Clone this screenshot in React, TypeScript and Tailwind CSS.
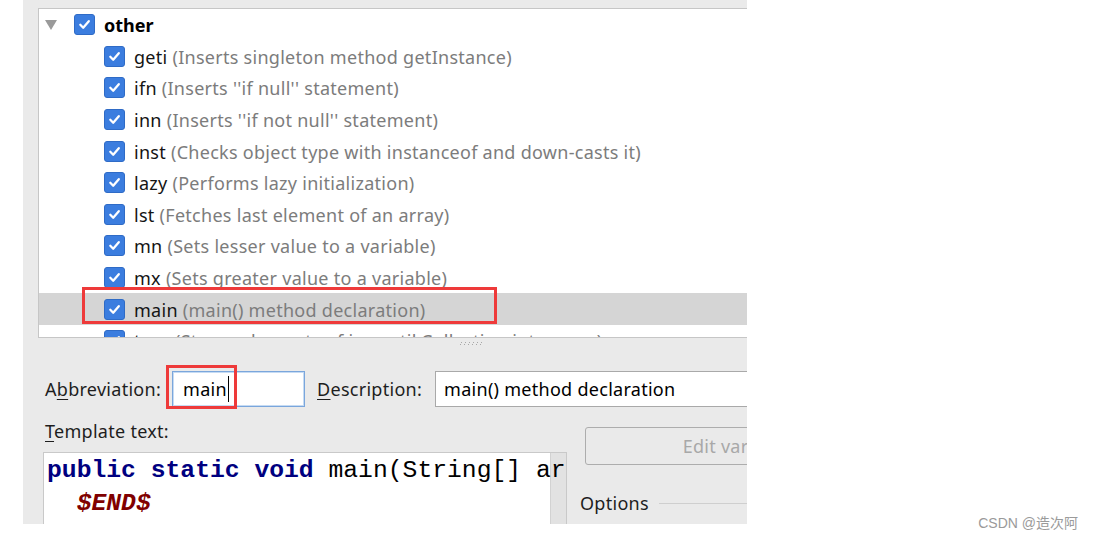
import React from "react";

const UI = { fontFamily: '"Noto Sans", "Open Sans", sans-serif' };
const MONO = { fontFamily: '"Liberation Mono", "DejaVu Sans Mono", monospace' };

function Check() {
  return (
    <div className="w-[21px] h-[21px] shrink-0 rounded-[3px] bg-[#3b7ddf] border border-[#2f6bc6] flex items-center justify-center">
      <svg width="15" height="15" viewBox="0 0 15 15">
        <path d="M3.3 7.8 L6.2 10.7 L11.8 4.2" fill="none" stroke="white" strokeWidth="2.3" strokeLinecap="round" strokeLinejoin="round" />
      </svg>
    </div>
  );
}

type Item = { abbr: string; desc: string };

const items: Item[] = [
  { abbr: "geti", desc: "Inserts singleton method getInstance" },
  { abbr: "ifn", desc: "Inserts ''if null'' statement" },
  { abbr: "inn", desc: "Inserts ''if not null'' statement" },
  { abbr: "inst", desc: "Checks object type with instanceof and down-casts it" },
  { abbr: "lazy", desc: "Performs lazy initialization" },
  { abbr: "lst", desc: "Fetches last element of an array" },
  { abbr: "mn", desc: "Sets lesser value to a variable" },
  { abbr: "mx", desc: "Sets greater value to a variable" },
  { abbr: "main", desc: "main() method declaration" },
  { abbr: "toar", desc: "Stores elements of java.util.Collection into array" },
];

function Row({ item, selected }: { item: Item; selected?: boolean }) {
  return (
    <div className={`relative flex items-center h-[31.6px] pl-[65px] shrink-0 ${selected ? "bg-[#d5d5d5]" : ""}`}>
      <Check />
      <span className="ml-[9px] pt-[2px] whitespace-pre text-[18px] tracking-[0.28px] text-[#141414]">{item.abbr} </span>
      <span className="pt-[2px] whitespace-pre text-[18px] tracking-[0.28px] text-[#7c7c7c]">({item.desc})</span>
      {selected && (
        <div className="absolute left-[43px] top-[-6px] w-[415px] h-[37px] border-[3px] border-[#ee3a3a]" />
      )}
    </div>
  );
}

export default function App() {
  return (
    <div className="w-[1094px] h-[543px] bg-white flex overflow-hidden" style={UI}>
      <div className="ml-[23px] w-[724px] h-[524px] bg-[#eaeaea] overflow-hidden flex flex-col shrink-0">
        {/* tree */}
        <div className="ml-[15px] mt-[8px] h-[330px] w-[740px] shrink-0 border-l border-t border-b border-[#c6c6c6] bg-white overflow-hidden flex flex-col">
          <div className="flex items-center h-[31.6px] pl-[6px] shrink-0">
            <svg width="12" height="10" viewBox="0 0 12 10" className="shrink-0">
              <polygon points="0,0 12,0 6,10" fill="#9a9a9a" />
            </svg>
            <div className="ml-[17px]"><Check /></div>
            <span className="ml-[9px] pt-[2px] text-[18px] font-bold text-black">other</span>
          </div>
          {items.map((it) => (
            <Row key={it.abbr} item={it} selected={it.abbr === "main"} />
          ))}
        </div>
        {/* grip */}
        <div className="h-[12px] shrink-0 flex items-center pl-[437px]">
          <svg width="26" height="4" viewBox="0 0 26 4">
            {[0, 4, 8, 12, 16, 20].map((x) => (
              <g key={x}>
                <rect x={x + 1} y={0} width="1" height="1" fill="#a8a8a8" />
                <rect x={x} y={2} width="1" height="1" fill="#a8a8a8" />
              </g>
            ))}
          </svg>
        </div>
        {/* abbreviation row */}
        <div className="mt-[21px] h-[36px] flex items-center pl-[22px] shrink-0 text-[18px] tracking-[0.28px] text-[#1e1e1e]">
          <span>A<span className="underline underline-offset-[3px]">b</span>breviation:</span>
          <div className="relative ml-[11px] w-[133px] h-[36px] shrink-0 bg-white border border-[#7aa6dc] shadow-[inset_0_0_0_1px_#c6dbf3] flex items-center pl-[10px]">
            <span className="text-black">main</span>
            <span className="ml-[1px] w-[1px] h-[26px] bg-black" />
            <div className="absolute left-[-7px] top-[-7px] w-[71px] h-[44px] border-[3px] border-[#ee3a3a]" />
          </div>
          <span className="ml-[12px]"><span className="underline underline-offset-[3px]">D</span>escription:</span>
          <div className="ml-[13px] w-[400px] h-[36px] shrink-0 bg-white border border-[#a9a9a9] flex items-center pl-[8px] text-black">
            main() method declaration
          </div>
        </div>
        {/* bottom part */}
        <div className="flex shrink-0">
          <div className="flex flex-col pl-[20px] w-[544px] shrink-0">
            <div className="mt-[13px] h-[22px] flex items-center pl-[2px] text-[18px] tracking-[0.28px] text-[#1e1e1e]">
              <span><span className="underline underline-offset-[3px]">T</span>emplate text:</span>
            </div>
            <div className="mt-[10px] h-[90px] w-[524px] bg-white border border-[#c9c9c9] relative flex overflow-hidden">
              <div className="absolute right-0 top-0 bottom-0 w-[16px] bg-[#e2e2e2] border-l border-[#d2d2d2]" />
              <div className="relative flex-1 pl-[3px] pt-[1px] text-[24.7px] leading-[33px] whitespace-pre" style={MONO}>
                <div>
                  <span className="font-bold text-[#000080]">public static void</span>
                  <span className="text-black"> main(String[] ar</span>
                </div>
                <div>
                  <span className="text-black">  </span>
                  <span className="font-bold italic text-[#800000]">$END$</span>
                </div>
              </div>
            </div>
          </div>
          <div className="flex flex-col ml-[18px]">
            <div className="mt-[20px] w-[306px] h-[38px] rounded-[3px] border border-[#adadad] flex items-center justify-center pl-[6px] text-[18px] tracking-[0.28px] text-[#a8a8a8]">
              Edit variables
            </div>
            <div className="mt-[27px] h-[22px] flex items-center text-[18px] tracking-[0.28px] text-[#1e1e1e] -ml-[5px]">
              <span>Options</span>
              <div className="ml-[10px] w-[200px] h-[1px] bg-[#cfcfcf]" />
            </div>
          </div>
        </div>
      </div>
      <div className="flex-1 flex items-end justify-end pb-[9px] pr-[16px]">
        <span className="text-[14px] text-[#9a9a9a]" style={{ fontFamily: '"Liberation Sans", "Noto Sans CJK SC", sans-serif' }}>
          CSDN @造次阿
        </span>
      </div>
    </div>
  );
}
